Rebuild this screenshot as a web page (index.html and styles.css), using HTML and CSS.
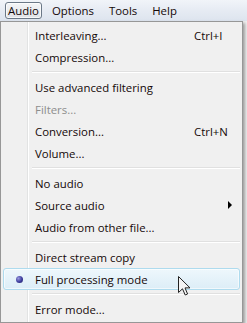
FILE: index.html
```html
<!DOCTYPE html>
<html lang="en">
<head>
    <meta charset="UTF-8">
    <title>Audio menu</title>
    <link rel="stylesheet" href="styles.css">
</head>
<body>
    <div class="menubar">
        <span class="top-item open">Audio</span>
        <span class="top-item">Options</span>
        <span class="top-item">Tools</span>
        <span class="top-item">Help</span>
    </div>
    <div class="menu">
        <div class="item"><span class="check"></span><span class="label">Interleaving...</span><span class="key">Ctrl+I</span></div>
        <div class="item"><span class="check"></span><span class="label">Compression...</span></div>
        <div class="sep"></div>
        <div class="item"><span class="check"></span><span class="label">Use advanced filtering</span></div>
        <div class="item disabled"><span class="check"></span><span class="label">Filters...</span></div>
        <div class="item"><span class="check"></span><span class="label">Conversion...</span><span class="key">Ctrl+N</span></div>
        <div class="item"><span class="check"></span><span class="label">Volume...</span></div>
        <div class="sep"></div>
        <div class="item"><span class="check"></span><span class="label">No audio</span></div>
        <div class="item"><span class="check"></span><span class="label">Source audio</span><span class="arrow"></span></div>
        <div class="item"><span class="check"></span><span class="label">Audio from other file...</span></div>
        <div class="sep"></div>
        <div class="item"><span class="check"></span><span class="label">Direct stream copy</span></div>
        <div class="item hover"><span class="check"><span class="bullet"></span></span><span class="label">Full processing mode</span></div>
        <div class="sep"></div>
        <div class="item"><span class="check"></span><span class="label">Error mode...</span></div>

        <!-- mouse pointer over the hovered item -->
        <svg class="cursor" width="13" height="20" viewBox="0 0 13 20">
            <path d="M0.5 0.5 L0.5 16.5 L4.5 12.8 L7.2 19 L9.6 18 L7 11.9 L12 11.9 Z" fill="#f4f4f4" stroke="#222" stroke-width="1" stroke-linejoin="miter"/>
        </svg>
    </div>
</body>
</html>
```

FILE: styles.css
```css
* {
    margin: 0;
    padding: 0;
    box-sizing: border-box;
}

body {
    font-family: 'Open Sans', 'Noto Sans', sans-serif;
    font-size: 11.4px;
    color: #140808;
    background-color: #f0f0f0;
    width: 247px;
    height: 323px;
    overflow: hidden;
}

.menubar {
    display: flex;
    align-items: center;
    height: 21px;
    padding-left: 5px;
    background: linear-gradient(to bottom, #f1f4f9 0%, #e6ebf3 50%, #dde4ee 100%);
}

.top-item {
    height: 17px;
    line-height: 15px;
    padding: 0 6px;
    margin-right: 1px;
    border: 1px solid transparent;
    border-radius: 3px;
}

.top-item.open {
    padding: 0 2px;
    margin-right: 3px;
    border-color: #6b7887;
    background: linear-gradient(to bottom, #f4f5f7 0%, #dfe2e7 100%);
    box-shadow: inset 0 0 0 1px rgba(255, 255, 255, 0.7);
}

.menu {
    position: relative;
    width: 243px;
    height: 302px;
    padding: 2px;
    border: 1px solid #979797;
    background-color: #f0f0f0;
    background-image: linear-gradient(to right, transparent 26px, #e2e3e3 26px, #e2e3e3 27px, #fff 27px, #fff 28px, transparent 28px);
    box-shadow: 2px 2px 3px rgba(0, 0, 0, 0.35);
}

.item {
    display: flex;
    align-items: center;
    height: 22px;
    border: 1px solid transparent;
    border-radius: 3px;
}

.item .check {
    width: 31px;
    display: flex;
    justify-content: center;
    align-items: center;
}

.item .label {
    flex: 1;
}

.item .key {
    width: 45px;
}

.item.disabled {
    color: #8d8d8d;
}

.item.hover {
    border-color: #aedbee;
    background: linear-gradient(to bottom, #eef7fc 0%, #dcedf7 100%);
    box-shadow: inset 0 0 0 1px rgba(255, 255, 255, 0.6);
}

.bullet {
    width: 7px;
    height: 7px;
    border-radius: 50%;
    background: radial-gradient(circle at 35% 35%, #9a9ae0 0%, #3c3c9c 55%, #1e1e66 100%);
}

.arrow {
    width: 0;
    height: 0;
    margin-right: 7px;
    border-top: 4px solid transparent;
    border-bottom: 4px solid transparent;
    border-left: 4px solid #000;
}

.sep {
    height: 2px;
    margin: 3px 0 3px 29px;
    border-top: 1px solid #e0e0e0;
    border-bottom: 1px solid #fff;
}

.cursor {
    position: absolute;
    left: 177px;
    top: 254px;
}
```
